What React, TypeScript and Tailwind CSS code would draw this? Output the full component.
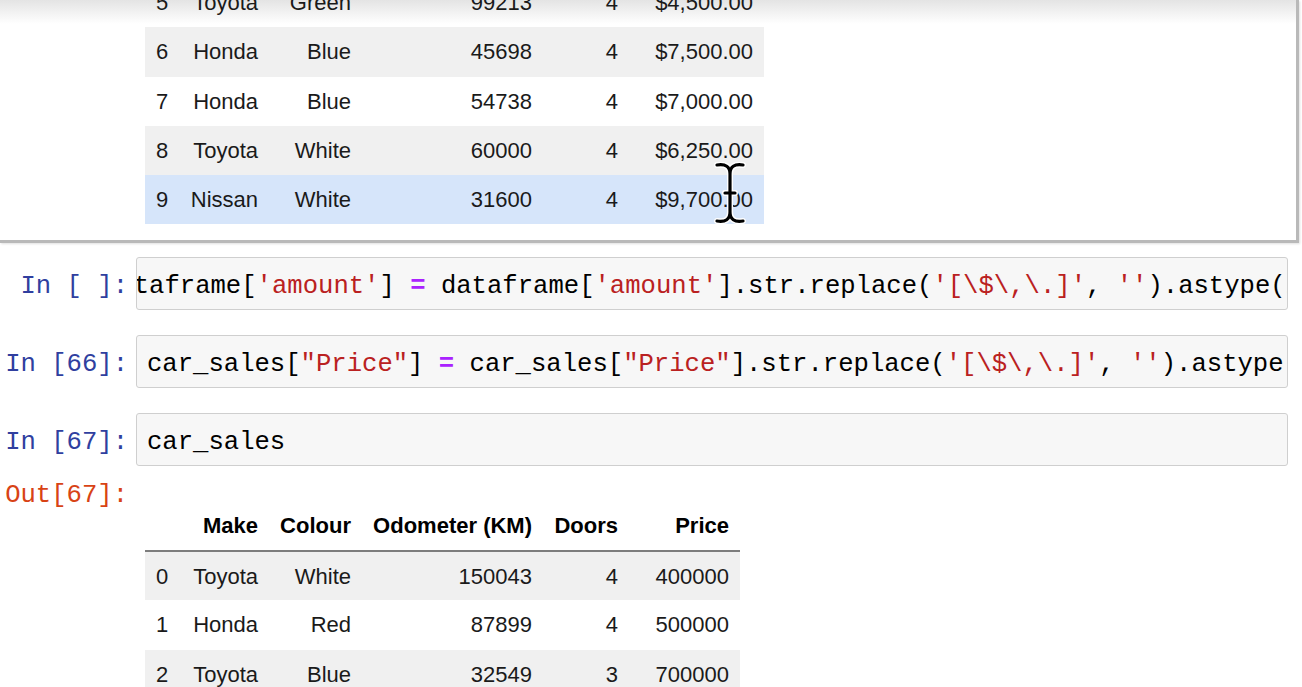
import React from 'react';

const topRows = [
  ['5', 'Toyota', 'Green', '99213', '4', '$4,500.00'],
  ['6', 'Honda', 'Blue', '45698', '4', '$7,500.00'],
  ['7', 'Honda', 'Blue', '54738', '4', '$7,000.00'],
  ['8', 'Toyota', 'White', '60000', '4', '$6,250.00'],
  ['9', 'Nissan', 'White', '31600', '4', '$9,700.00'],
];

const bottomRows = [
  ['0', 'Toyota', 'White', '150043', '4', '400000'],
  ['1', 'Honda', 'Red', '87899', '4', '500000'],
  ['2', 'Toyota', 'Blue', '32549', '3', '700000'],
  ['3', 'BMW', 'Black', '11179', '5', '2200000'],
];

const Str = ({ children }: { children: React.ReactNode }) => (
  <span className="text-[#ba2121]">{children}</span>
);

const Eq = () => <span className="text-[#aa22ff] font-bold">=</span>;

const Prompt = ({ label }: { label: string }) => (
  <div className="w-[136px] shrink-0 pr-[8px] pt-[7px] text-right whitespace-pre text-[#303f9f]">{label}</div>
);

const CodeBox = ({ children, shift }: { children: React.ReactNode; shift?: boolean }) => (
  <div className="w-[1152px] h-[53px] flex items-center overflow-hidden rounded-[3px] border border-[#cfcfcf] bg-[#f7f7f7] pl-[10px]">
    <div className={shift ? 'ml-[-44px] pt-[7px] whitespace-pre text-black' : 'pt-[7px] whitespace-pre text-black'}>{children}</div>
  </div>
);

const Cols = ({ last }: { last: string }) => (
  <colgroup>
    <col className="w-[34px]" />
    <col className="w-[90px]" />
    <col className="w-[93px]" />
    <col className="w-[181px]" />
    <col className="w-[86px]" />
    <col className={last} />
  </colgroup>
);

const rowBg = (i: number, hover: boolean) => {
  if (hover) return 'bg-[#d6e5fa]';
  return i % 2 === 0 ? 'bg-[#f0f0f0]' : 'bg-transparent';
};

const Body = ({ rows, hoverIdx }: { rows: string[][]; hoverIdx?: string }) => (
  <tbody>
    {rows.map((r) => (
      <tr key={r[0]} className={`h-[49.3px] ${rowBg(Number(r[0]), r[0] === hoverIdx)}`}>
        {r.map((c, j) => (
          <td key={j} className="px-[11px] text-right">{c}</td>
        ))}
      </tr>
    ))}
  </tbody>
);

const App = () => {
  return (
    <div className="relative w-[1302px] h-[687px] overflow-hidden bg-white text-[#1a1a1a]">
      {/* scrolled output of the previous cell */}
      <div className="relative h-[243px] w-[1299px] overflow-hidden border-r-[3px] border-b-[3px] border-[#b9b9b9] shadow-[1px_1px_2px_rgba(0,0,0,0.12)]">
        <div className="absolute inset-x-0 top-0 h-[24px] bg-linear-to-b from-[#e4e4e4] to-white/0" />
        <table className="relative ml-[145px] mt-[-22px] w-[619px] table-fixed border-collapse font-['Liberation_Sans',Arial,sans-serif] text-[22px]">
          <Cols last="w-[135px]" />
          <Body rows={topRows} hoverIdx="9" />
        </table>
      </div>

      <div className="flex flex-col gap-[25px] pt-[14px] font-['Liberation_Mono','Courier_New',monospace] text-[25.6px]">
        <div className="flex items-center">
          <Prompt label="In [ ]:" />
          <CodeBox shift>
            dataframe[<Str>'amount'</Str>] <Eq /> dataframe[<Str>'amount'</Str>].str.replace(<Str>{"'[\\$\\,\\.]'"}</Str>, <Str>''</Str>).astype(int)
          </CodeBox>
        </div>
        <div className="flex items-center">
          <Prompt label="In [66]:" />
          <CodeBox>
            car_sales[<Str>"Price"</Str>] <Eq /> car_sales[<Str>"Price"</Str>].str.replace(<Str>{"'[\\$\\,\\.]'"}</Str>, <Str>''</Str>).astype(int)
          </CodeBox>
        </div>
        <div className="flex items-center">
          <Prompt label="In [67]:" />
          <CodeBox>car_sales</CodeBox>
        </div>
      </div>

      <div className="mt-[12px] flex">
        <div className="w-[136px] shrink-0 pr-[8px] pt-[3px] text-right leading-[30px] font-['Liberation_Mono','Courier_New',monospace] text-[25.6px] text-[#d84315]">
          Out[67]:
        </div>
        <div className="ml-[9px] pt-[23px]">
          <table className="w-[595px] table-fixed border-collapse font-['Liberation_Sans',Arial,sans-serif] text-[22px]">
            <Cols last="w-[111px]" />
            <thead>
              <tr className="h-[50px]">
                <th className="border-b-2 border-[#7d7d7d]"></th>
                <th className="border-b-2 border-[#7d7d7d] px-[11px] text-right font-bold text-black">Make</th>
                <th className="border-b-2 border-[#7d7d7d] px-[11px] text-right font-bold text-black">Colour</th>
                <th className="border-b-2 border-[#7d7d7d] px-[11px] text-right font-bold text-black whitespace-nowrap">Odometer (KM)</th>
                <th className="border-b-2 border-[#7d7d7d] px-[11px] text-right font-bold text-black">Doors</th>
                <th className="border-b-2 border-[#7d7d7d] px-[11px] text-right font-bold text-black">Price</th>
              </tr>
            </thead>
            <Body rows={bottomRows} />
          </table>
        </div>
      </div>

      {/* text cursor */}
      <svg className="absolute left-[714px] top-[162px]" width="32" height="62" viewBox="0 0 32 62" fill="none">
        <g strokeLinecap="round" strokeLinejoin="round">
          <path d="M3 3 Q16 1 16 12 Q16 1 29 3 M16 12 V50 M3 59 Q16 61 16 50 Q16 61 29 59 M11 31 H21" stroke="white" strokeWidth="6" />
          <path d="M3 3 Q16 1 16 12 Q16 1 29 3 M16 12 V50 M3 59 Q16 61 16 50 Q16 61 29 59 M11 31 H21" stroke="black" strokeWidth="3.2" />
        </g>
      </svg>
    </div>
  );
};

export default App;
